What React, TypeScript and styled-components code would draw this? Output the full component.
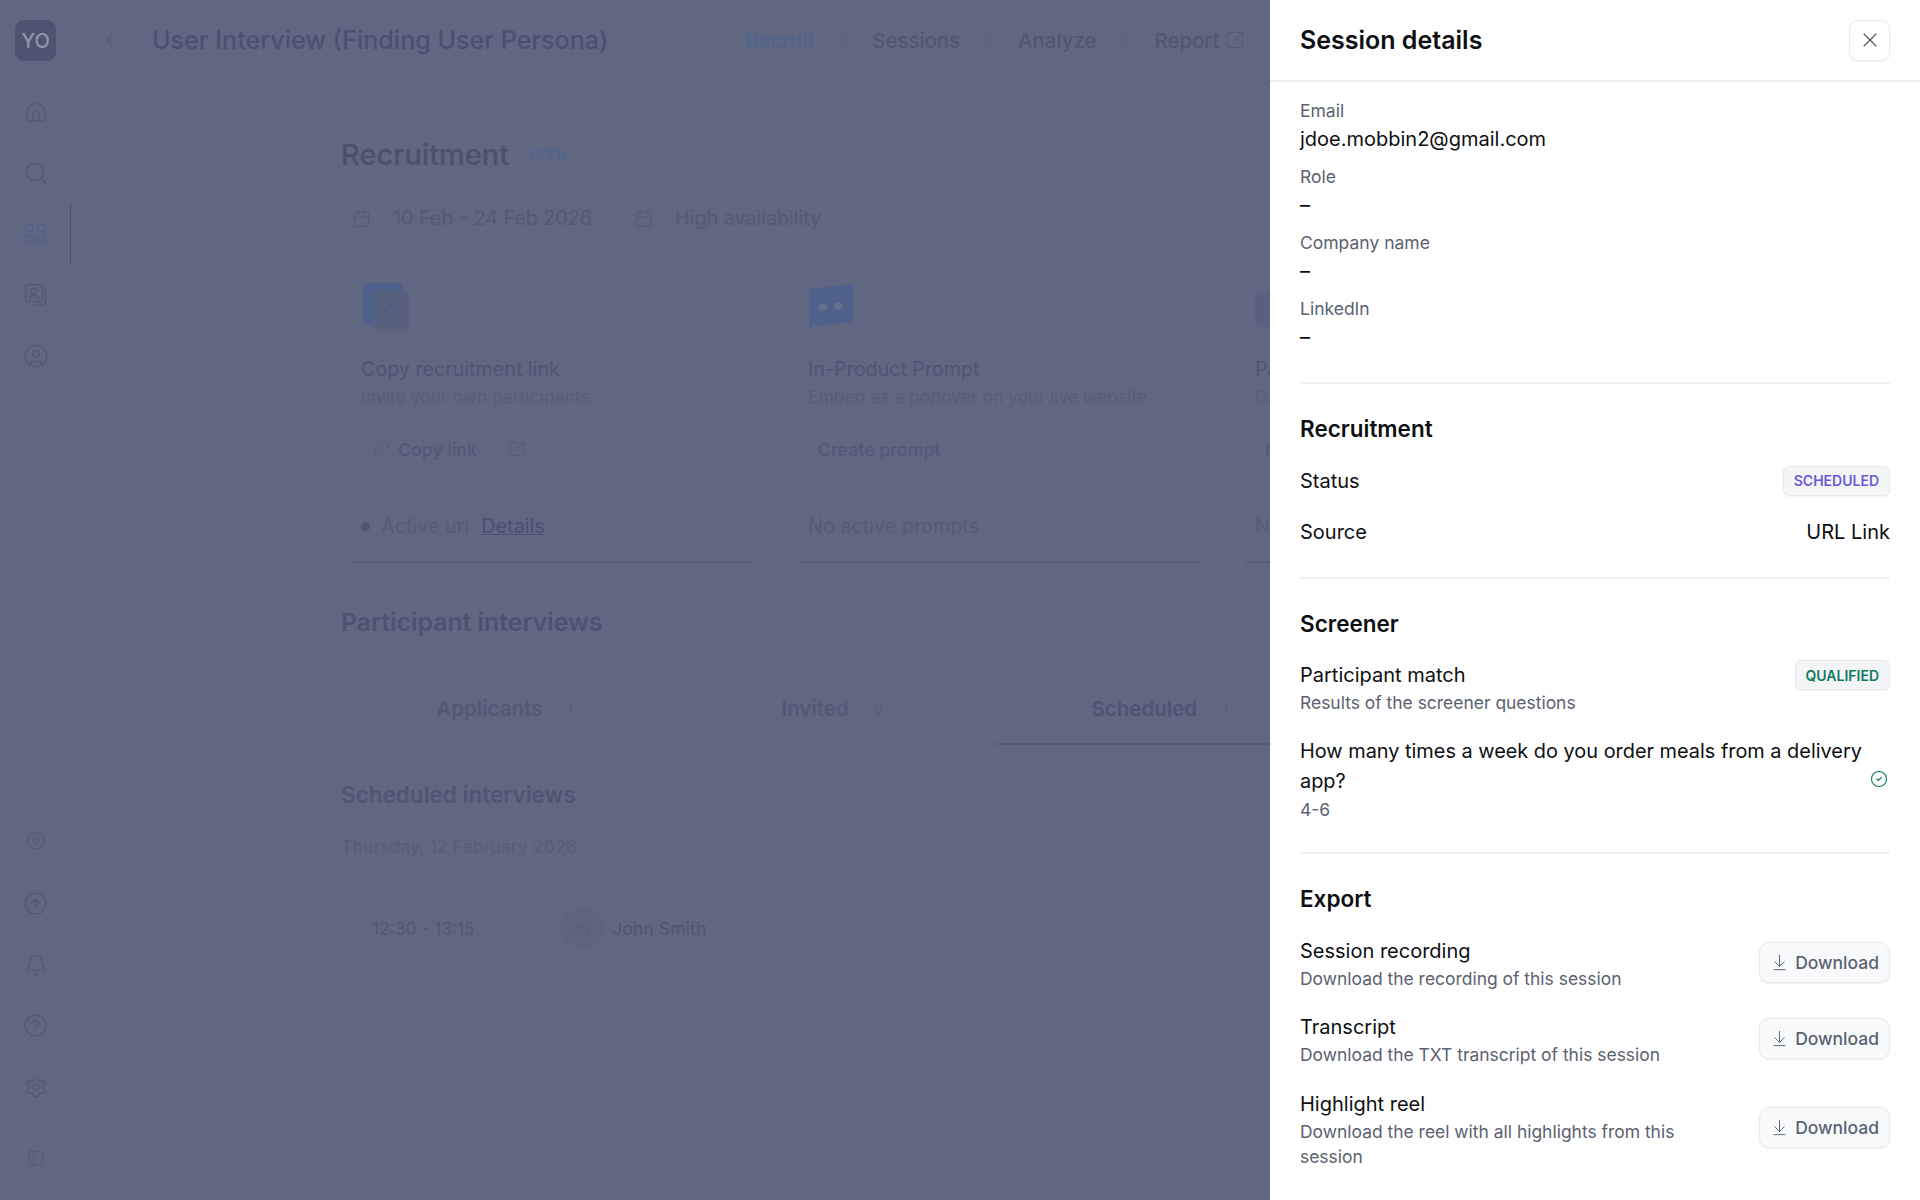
import * as React from 'react'
import styled, { createGlobalStyle } from 'styled-components'
import {
  ArrowDownToLine,
  ArrowLeft,
  Bell,
  Calendar,
  ChevronRight,
  CircleArrowUp,
  CircleCheck,
  CircleHelp,
  CirclePlay,
  CircleUser,
  House,
  LayoutGrid,
  Link,
  PanelLeft,
  Search,
  Settings,
  SquareArrowOutUpRight,
  X,
} from 'lucide-react'

const GlobalStyle = createGlobalStyle`
  html, body {
    margin: 0;
    padding: 0;
    width: 1920px;
    height: 1200px;
    overflow: hidden;
    background: #606780;
    font-family: Inter, "Liberation Sans", sans-serif;
  }
  * { box-sizing: border-box; }
`

const Page = styled.div`
  display: flex;
  width: 1920px;
  height: 1200px;
  overflow: hidden;
  background: #606780;
  color: #4b5270;
`

const Scrim = styled.div`
  position: fixed;
  inset: 0;
  backdrop-filter: blur(0.7px);
`

const Sidebar = styled.nav`
  flex: 0 0 71px;
  display: flex;
  flex-direction: column;
  align-items: center;
  padding: 20px 0 12px;
  color: #515873;
`

const Logo = styled.div`
  width: 41px;
  height: 41px;
  margin-bottom: 20px;
  border-radius: 9px;
  background: #4d5470;
  color: #9296a9;
  font-size: 20px;
  font-weight: 500;
  display: flex;
  align-items: center;
  justify-content: center;
`

const NavItem = styled.div<{ $active?: boolean; $height?: number }>`
  position: relative;
  width: 71px;
  height: ${(p) => p.$height ?? 61}px;
  flex: none;
  display: flex;
  align-items: center;
  justify-content: center;
  color: ${(p) => (p.$active ? '#50618a' : 'inherit')};
  ${(p) =>
    p.$active &&
    `&::after {
      content: '';
      position: absolute;
      right: 0;
      top: 0;
      bottom: 0;
      width: 1px;
      background: #4e5570;
    }`}
`

const NavBottom = styled.div`
  margin-top: auto;
  display: flex;
  flex-direction: column;
`

const NavFoot = styled(NavItem)`
  margin-top: 10px;
`

const Main = styled.main`
  flex: 1;
  min-width: 0;
`

const Header = styled.header`
  height: 80px;
  display: flex;
  align-items: center;
  padding-left: 32px;
`

const BackIcon = styled(ArrowLeft)`
  color: #525974;
  margin-right: 31px;
`

const ProjectTitle = styled.h1`
  margin: 0 137px 0 0;
  font-size: 25.1px;
  line-height: 32px;
  font-weight: 500;
  color: #4a5170;
  white-space: nowrap;
`

const Steps = styled.div`
  display: flex;
  align-items: center;
  font-size: 20.4px;
  font-weight: 500;
  white-space: nowrap;
`

const Step = styled.span<{ $active?: boolean }>`
  color: ${(p) => (p.$active ? '#4f648e' : '#505772')};
`

const StepArrow = styled(ChevronRight)`
  color: #565d78;
  margin: 0 20px;
`

const StepLink = styled(SquareArrowOutUpRight)`
  margin-left: 6px;
  color: #525974;
`

const Content = styled.div`
  width: 1500px;
  padding: 57px 0 0 270px;
`

const HeadingRow = styled.div`
  display: flex;
  align-items: center;
  gap: 21px;
`

const PageHeading = styled.h2`
  margin: 0;
  font-size: 29px;
  line-height: 36px;
  font-weight: 500;
  color: #4b5169;
`

const OpenTag = styled.span`
  font-size: 12.5px;
  font-weight: 600;
  letter-spacing: 0.5px;
  color: #4f648e;
`

const MetaRow = styled.div`
  display: flex;
  align-items: center;
  height: 24px;
  margin: 33px 0 0 11px;
  font-size: 19.7px;
  color: #535a75;
`

const MetaItem = styled.div`
  display: flex;
  align-items: center;
  gap: 22px;
  margin-right: 42px;
  white-space: nowrap;
`

const Cards = styled.div`
  display: grid;
  grid-template-columns: repeat(3, 401px);
  column-gap: 46px;
  margin: 53px 0 0 11px;
`

const Card = styled.div`
  padding: 0 9px 23px;
  border-bottom: 2px solid #565d78;
`

const CardIcon = styled.svg`
  display: block;
  width: 50px;
  height: 50px;
`

const CardTitle = styled.div`
  margin-top: 24px;
  font-size: 19.7px;
  line-height: 24px;
  color: #4e5572;
  white-space: nowrap;
`

const CardSub = styled.div`
  margin-top: 5px;
  font-size: 17.5px;
  line-height: 22px;
  color: #575e78;
  white-space: nowrap;
`

const CardActions = styled.div`
  display: flex;
  align-items: center;
  height: 40px;
  margin-top: 21px;
  padding-left: 12px;
  font-size: 17.8px;
  font-weight: 500;
  color: #525976;
  white-space: nowrap;
`

const ActionLabel = styled.span`
  margin: 0 31px 0 8px;
`

const PlainAction = styled.span`
  margin-left: -2px;
`

const CardStatus = styled.div`
  display: flex;
  align-items: center;
  height: 24px;
  margin-top: 45px;
  font-size: 19.8px;
  color: #555c77;
  white-space: nowrap;
`

const Dot = styled.span`
  width: 9px;
  height: 9px;
  margin-right: 11px;
  border-radius: 50%;
  background: #4f5672;
`

const DetailsLink = styled.span`
  margin-left: 12px;
  color: #4a5170;
  text-decoration: underline;
`

const SectionHeading = styled.h3`
  margin: 44px 0 0;
  font-size: 24.8px;
  line-height: 30px;
  font-weight: 600;
  color: #4c5370;
`

const Tabs = styled.div`
  display: grid;
  grid-template-columns: repeat(3, 327.5px);
  margin-top: 36px;
`

const Tab = styled.div<{ $active?: boolean }>`
  height: 72px;
  display: flex;
  align-items: center;
  justify-content: center;
  gap: 25px;
  font-size: 20.5px;
  font-weight: 600;
  color: ${(p) => (p.$active ? '#4e5572' : '#525974')};
  border-bottom: 2px solid ${(p) => (p.$active ? '#555c77' : 'transparent')};
`

const TabCount = styled.span`
  font-size: 14px;
  color: #585f7a;
`

const SubHeading = styled.h4`
  margin: 36px 0 0;
  font-size: 22.5px;
  line-height: 28px;
  font-weight: 600;
  color: #4f5672;
`

const DayLabel = styled.div`
  margin-top: 26px;
  font-size: 17.8px;
  line-height: 24px;
  color: #575e78;
`

const InterviewRow = styled.div`
  display: flex;
  align-items: center;
  height: 48px;
  margin-top: 45px;
  padding-left: 31px;
  font-size: 17.8px;
  color: #4f5672;
`

const TimeSlot = styled.span`
  width: 189px;
  font-size: 17.4px;
  color: #525974;
`

const Avatar = styled.span`
  width: 42px;
  height: 40px;
  margin-right: 9px;
  border-radius: 50%;
  background: #5d647e;
  color: #565d78;
  font-size: 13px;
  display: flex;
  align-items: center;
  justify-content: center;
`

const Drawer = styled.aside`
  position: fixed;
  top: 0;
  right: 0;
  width: 650px;
  height: 1200px;
  overflow: hidden;
  background: #fff;
  color: #0e0f12;
`

const DrawerHeader = styled.div`
  height: 82px;
  display: flex;
  align-items: center;
  justify-content: space-between;
  padding: 0 30px;
  border-bottom: 2px solid #eff0f2;
`

const DrawerTitle = styled.h2`
  margin: 0;
  font-size: 25px;
  line-height: 32px;
  font-weight: 600;
`

const CloseButton = styled.button`
  width: 41px;
  height: 41px;
  padding: 0;
  display: flex;
  align-items: center;
  justify-content: center;
  background: #fff;
  color: #4a4e57;
  border: 1px solid #e7e9ed;
  border-radius: 9px;
  box-shadow: 0 1px 2px rgba(20, 25, 40, 0.06);
`

const DrawerBody = styled.div`
  padding: 0 30px;
`

const Fields = styled.div`
  display: flex;
  flex-direction: column;
  gap: 11px;
  padding: 17px 0 30px;
  border-bottom: 2px solid #f0f1f3;
`

const Field = styled.div`
  display: flex;
  flex-direction: column;
  gap: 1px;
`

const FieldLabel = styled.span`
  font-size: 17.5px;
  line-height: 24px;
  color: #5b6170;
`

const FieldValue = styled.span`
  font-size: 20px;
  line-height: 30px;
`

const Section = styled.section<{ $last?: boolean }>`
  display: flex;
  flex-direction: column;
  gap: 21.5px;
  padding: 30px 0 29.5px;
  border-bottom: ${(p) => (p.$last ? 'none' : '2px solid #f0f1f3')};
`

const SectionTitle = styled.h3`
  margin: 0;
  font-size: 22.5px;
  line-height: 30px;
  font-weight: 600;
`

const Row = styled.div<{ $align?: string }>`
  display: flex;
  align-items: ${(p) => p.$align ?? 'center'};
  justify-content: space-between;
  gap: 4px;
`

const QuestionRow = styled(Row)`
  margin: -1px 0 1px;
`

const RowText = styled.div`
  min-width: 0;
  flex: 1;
`

const RowTitle = styled.div`
  font-size: 20px;
  line-height: 30px;
`

const ExportText = styled(RowText)`
  max-width: 430px;
`

const Question = styled.div`
  font-size: 19.9px;
  line-height: 30.5px;
`

const RowHint = styled.div`
  font-size: 17.45px;
  line-height: 25px;
  color: #5b6170;
`

const Badge = styled.span<{ $tone: string }>`
  display: inline-flex;
  align-items: center;
  height: 30px;
  padding: 0 10px 0 9.5px;
  border-radius: 6px;
  border: 1px solid #e6e8ec;
  background: #f4f5f7;
  box-shadow: 0 1px 1px rgba(20, 25, 40, 0.05);
  font-size: 14px;
  font-weight: 600;
  white-space: nowrap;
  color: ${(p) => p.$tone};
`

const CheckIcon = styled(CircleCheck)`
  flex: none;
  color: #0f7a5f;
  margin-right: 2px;
`

const DownloadButton = styled.button`
  flex: none;
  width: 131px;
  height: 41px;
  margin-bottom: 2px;
  display: flex;
  align-items: center;
  justify-content: flex-end;
  gap: 6px;
  padding: 0 10px 0 0;
  border: 1px solid #e8eaef;
  border-radius: 10px;
  background: #f8f9fb;
  box-shadow: 0 1px 2px rgba(20, 25, 40, 0.07);
  color: #5b6272;
  font-family: inherit;
  font-size: 17.5px;
  font-weight: 500;
`

const fields = [
  { label: 'Email', value: 'jdoe.mobbin2@gmail.com' },
  { label: 'Role', value: '–' },
  { label: 'Company name', value: '–' },
  { label: 'LinkedIn', value: '–' },
]

const exportsList = [
  { title: 'Session recording', hint: 'Download the recording of this session' },
  { title: 'Transcript', hint: 'Download the TXT transcript of this session' },
  { title: 'Highlight reel', hint: 'Download the reel with all highlights from this session' },
]

const ContactsIcon = () => (
  <svg width="24" height="24" viewBox="0 0 24 24" fill="none" stroke="currentColor" strokeWidth="1.2">
    <rect x="1.5" y="1.5" width="17" height="17" rx="2.5" />
    <circle cx="10" cy="8" r="2.8" />
    <path d="M5.5 16c.6-2.6 2.4-3.6 4.5-3.6s3.900 1 4.500 3.600" />
    <path d="M21.500 6v13.500a2.500 2.500 0 0 1-2.500 2.500H6" />
  </svg>
)

const LinkCardIcon = () => (
  <CardIcon viewBox="0 0 50 50">
    <rect x="12" y="8" width="36" height="40" rx="4" fill="#5a617c" />
    <rect x="2" y="0" width="40" height="42" rx="4" fill="#50618c" />
    <rect x="12" y="8" width="30" height="34" fill="#566280" />
    <path d="M22 30l8-6M24 22h10" stroke="#4e5d85" strokeWidth="2" />
  </CardIcon>
)

const PromptCardIcon = () => (
  <CardIcon viewBox="0 0 50 50">
    <path d="M1 6l44-5v38l-40 4-4 5z" fill="#50618c" />
    <circle cx="15" cy="24" r="4" fill="#646f8c" />
    <circle cx="30" cy="23" r="4" fill="#646f8c" />
  </CardIcon>
)

const PanelCardIcon = () => (
  <CardIcon viewBox="0 0 50 50">
    <rect x="0" y="10" width="44" height="34" rx="4" fill="#586280" />
  </CardIcon>
)

const RecruitCard: React.FC<{
  icon: React.ReactNode
  title: string
  sub: string
  action: React.ReactNode
  status: React.ReactNode
}> = ({ icon, title, sub, action, status }) => (
  <Card>
    {icon}
    <CardTitle>{title}</CardTitle>
    <CardSub>{sub}</CardSub>
    <CardActions>{action}</CardActions>
    <CardStatus>{status}</CardStatus>
  </Card>
)

export default function App() {
  return (
    <>
      <GlobalStyle />
      <Page>
        <Sidebar>
          <Logo>YO</Logo>
          <NavItem>
            <House size={24} strokeWidth={1.2} />
          </NavItem>
          <NavItem>
            <Search size={26} strokeWidth={1.2} />
          </NavItem>
          <NavItem $active>
            <LayoutGrid size={25} strokeWidth={1.3} />
          </NavItem>
          <NavItem>
            <ContactsIcon />
          </NavItem>
          <NavItem>
            <CircleUser size={26} strokeWidth={1.2} />
          </NavItem>
          <NavBottom>
            <NavItem $height={65}>
              <CirclePlay size={20} strokeWidth={1.2} />
            </NavItem>
            <NavItem>
              <CircleArrowUp size={25} strokeWidth={1.2} />
            </NavItem>
            <NavItem>
              <Bell size={24} strokeWidth={1.2} />
            </NavItem>
            <NavItem>
              <CircleHelp size={25} strokeWidth={1.2} />
            </NavItem>
            <NavItem>
              <Settings size={24} strokeWidth={1.2} />
            </NavItem>
            <NavFoot>
              <PanelLeft size={18} strokeWidth={1.2} />
            </NavFoot>
          </NavBottom>
        </Sidebar>

        <Main>
          <Header>
            <BackIcon size={18} strokeWidth={1.4} />
            <ProjectTitle>User Interview (Finding User Persona)</ProjectTitle>
            <Steps>
              <Step $active>Recruit</Step>
              <StepArrow size={18} strokeWidth={1.4} />
              <Step>Sessions</Step>
              <StepArrow size={18} strokeWidth={1.4} />
              <Step>Analyze</Step>
              <StepArrow size={18} strokeWidth={1.4} />
              <Step>Report</Step>
              <StepLink size={20} strokeWidth={1.2} />
            </Steps>
          </Header>

          <Content>
            <HeadingRow>
              <PageHeading>Recruitment</PageHeading>
              <OpenTag>OPEN</OpenTag>
            </HeadingRow>
            <MetaRow>
              <MetaItem>
                <Calendar size={19} strokeWidth={1.3} />
                10 Feb - 24 Feb 2026
              </MetaItem>
              <MetaItem>
                <Calendar size={19} strokeWidth={1.3} />
                High availability
              </MetaItem>
            </MetaRow>

            <Cards>
              <RecruitCard
                icon={<LinkCardIcon />}
                title="Copy recruitment link"
                sub="Invite your own participants"
                action={
                  <>
                    <Link size={17} strokeWidth={1.3} />
                    <ActionLabel>Copy link</ActionLabel>
                    <SquareArrowOutUpRight size={18} strokeWidth={1.2} />
                  </>
                }
                status={
                  <>
                    <Dot />
                    Active url
                    <DetailsLink>Details</DetailsLink>
                  </>
                }
              />
              <RecruitCard
                icon={<PromptCardIcon />}
                title="In-Product Prompt"
                sub="Embed as a popover on your live website"
                action={<PlainAction>Create prompt</PlainAction>}
                status="No active prompts"
              />
              <RecruitCard
                icon={<PanelCardIcon />}
                title="Participant panel"
                sub="Get participants from our panel"
                action={<PlainAction>Invite</PlainAction>}
                status="N/A"
              />
            </Cards>

            <SectionHeading>Participant interviews</SectionHeading>
            <Tabs>
              <Tab>
                Applicants <TabCount>1</TabCount>
              </Tab>
              <Tab>
                Invited <TabCount>0</TabCount>
              </Tab>
              <Tab $active>
                Scheduled <TabCount>1</TabCount>
              </Tab>
            </Tabs>

            <SubHeading>Scheduled interviews</SubHeading>
            <DayLabel>Thursday, 12 February 2026</DayLabel>
            <InterviewRow>
              <TimeSlot>12:30 - 13:15</TimeSlot>
              <Avatar>JS</Avatar>
              John Smith
            </InterviewRow>
          </Content>
        </Main>
      </Page>
      <Scrim />

      <Drawer>
        <DrawerHeader>
          <DrawerTitle>Session details</DrawerTitle>
          <CloseButton>
            <X size={24} strokeWidth={1.1} />
          </CloseButton>
        </DrawerHeader>
        <DrawerBody>
          <Fields>
            {fields.map((f) => (
              <Field key={f.label}>
                <FieldLabel>{f.label}</FieldLabel>
                <FieldValue>{f.value}</FieldValue>
              </Field>
            ))}
          </Fields>

          <Section>
            <SectionTitle>Recruitment</SectionTitle>
            <Row>
              <RowTitle>Status</RowTitle>
              <Badge $tone="#6a5ad8">SCHEDULED</Badge>
            </Row>
            <Row>
              <RowTitle>Source</RowTitle>
              <RowTitle>URL Link</RowTitle>
            </Row>
          </Section>

          <Section>
            <SectionTitle>Screener</SectionTitle>
            <Row $align="flex-start">
              <RowText>
                <RowTitle>Participant match</RowTitle>
                <RowHint>Results of the screener questions</RowHint>
              </RowText>
              <Badge $tone="#0f7a5f">QUALIFIED</Badge>
            </Row>
            <QuestionRow>
              <RowText>
                <Question>How many times a week do you order meals from a delivery app?</Question>
                <RowHint>4-6</RowHint>
              </RowText>
              <CheckIcon size={18} strokeWidth={1.5} />
            </QuestionRow>
          </Section>

          <Section $last>
            <SectionTitle>Export</SectionTitle>
            {exportsList.map((item) => (
              <Row key={item.title}>
                <ExportText>
                  <RowTitle>{item.title}</RowTitle>
                  <RowHint>{item.hint}</RowHint>
                </ExportText>
                <DownloadButton>
                  <ArrowDownToLine size={19} strokeWidth={1.2} />
                  Download
                </DownloadButton>
              </Row>
            ))}
          </Section>
        </DrawerBody>
      </Drawer>
    </>
  )
}
